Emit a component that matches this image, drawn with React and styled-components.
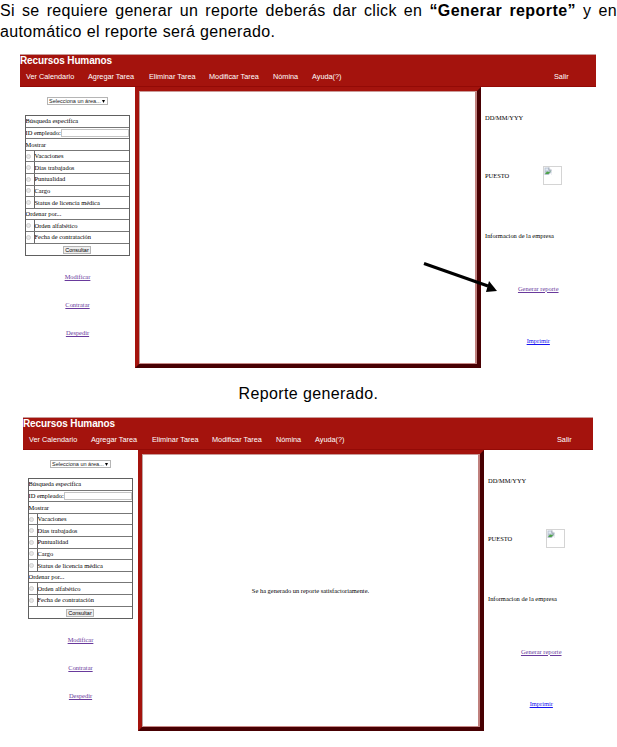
import React from "react";
import styled, { createGlobalStyle } from "styled-components";

const GlobalStyle = createGlobalStyle`
  * { box-sizing: border-box; }
  body { margin: 0; background: #fff; overflow: hidden; }
`;

const Page = styled.main`
  width: 617px;
  height: 747px;
  overflow: hidden;
  background: #fff;
  color: #000;
  font-family: "Liberation Sans", Arial, sans-serif;
`;

const Intro = styled.div`
  height: 54px;
  font-size: 16px;
  line-height: 21px;
`;

const IntroLine = styled.p`
  margin: 0;
  white-space: nowrap;
  letter-spacing: ${(p) => p.$tracking || 0}px;
  word-spacing: ${(p) => p.$gap || 0}px;
`;

const Strong = styled.b`
  letter-spacing: 0.42px;
`;

const Caption = styled.p`
  margin: 0;
  height: 49px;
  padding-top: 15px;
  text-align: center;
  font-size: 16px;
  line-height: 21px;
  letter-spacing: 0.38px;
`;

const Screen = styled.section`
  position: relative;
  width: ${(p) => p.$width}px;
  margin-left: ${(p) => p.$left}px;
`;

const Header = styled.header`
  height: 33px;
  border-top: 1px solid #c99a98;
  border-bottom: 1px solid #930a06;
  background: #a4130d;
  color: #fff;
`;

const Title = styled.h1`
  margin: 0;
  height: 12px;
  font-size: 10px;
  line-height: 11px;
  font-weight: bold;
  letter-spacing: -0.12px;
  white-space: nowrap;
`;

const Nav = styled.nav`
  display: flex;
  height: 19px;
  padding-left: 6px;
  gap: 14px;
  font-size: 7.3px;
  line-height: 20px;
  white-space: nowrap;
`;

const NavItem = styled.span`
  width: ${(p) => p.$width}px;
`;

const Logout = styled(NavItem)`
  margin-left: 198px;
`;

const Body = styled.div`
  display: grid;
  grid-template-columns: 115px 346px 115px;
  grid-template-rows: 281px;
  height: 281px;
  font-family: "Liberation Serif", "Times New Roman", serif;
  font-size: 6.45px;
`;

const Sidebar = styled.aside`
  display: flex;
  flex-direction: column;
  align-items: center;
  padding-top: 10px;
`;

const Select = styled.div`
  display: flex;
  align-items: center;
  justify-content: space-between;
  width: 61px;
  height: 8px;
  padding: 0 2px 0 1px;
  border: 1px solid #b5b5b5;
  color: #222;
  font-family: "Liberation Sans", Arial, sans-serif;
  font-size: 5.5px;
  line-height: 6px;
  white-space: nowrap;
`;

const Caret = styled.svg`
  width: 3px;
  height: 3px;
`;

const Filters = styled.div`
  display: grid;
  grid-template-rows: repeat(12, 11.62px);
  width: 105px;
  height: 141px;
  margin: 10px 1px 14px 0;
  border: 1px solid #606060;
  overflow: hidden;
`;

const FilterRow = styled.div`
  display: flex;
  align-items: center;
  justify-content: ${(p) => (p.$center ? "center" : "flex-start")};
  border-bottom: 1px solid #777;
  line-height: 10px;
  white-space: nowrap;

  &:last-child { border-bottom: 0; }
`;

const RadioCell = styled.span`
  display: flex;
  align-items: center;
  justify-content: center;
  width: 9px;
  height: 100%;
  flex: none;
  padding-right: 2px;
  border-right: 1px solid #666;
`;

const Radio = styled.span`
  width: 5px;
  height: 5px;
  border: 1px solid #d0d0d0;
  border-radius: 50%;
  background: #e8e8e8;
`;

const Field = styled.span`
  flex: 1;
  height: 8px;
  border: 1px solid #c4c4c4;
`;

const Submit = styled.span`
  height: 8px;
  padding: 0 1px;
  border: 1px solid #b5b5b5;
  background: #eee;
  font-family: "Liberation Sans", Arial, sans-serif;
  font-size: 5.5px;
  line-height: 6px;
`;

const Link = styled.a`
  color: ${(p) => (p.$fresh ? "#1414f0" : "#693a9c")};
  text-decoration: underline;
  text-decoration-thickness: 0.5px;
  white-space: nowrap;
`;

const SideLink = styled(Link)`
  height: 28px;
  line-height: 14px;
`;

const Frame = styled.section`
  display: flex;
  border: 4px solid;
  border-color: #a4130d #480002 #480002 #a4130d;
`;

const FrameInner = styled.div`
  display: flex;
  flex: 1;
  align-items: center;
  justify-content: center;
  border-style: solid;
  border-width: 1px 2px 1px 1px;
  border-color: #c99a98 #c0807d #c88a88 #bfa3a1;
`;

const Info = styled.aside`
  display: grid;
  grid-template-rows: 61px 55px 64px 42px 63px;
  width: 115px;
  padding-left: 4px;
`;

const InfoRow = styled.div`
  display: flex;
  align-items: center;
  justify-content: ${(p) => (p.$center ? "center" : "flex-start")};
  padding-right: ${(p) => (p.$center ? 4 : 0)}px;
  margin-left: ${(p) => (p.$center ? -0.5 : 0)}px;
  white-space: nowrap;
`;

const Role = styled.span`
  width: 58px;
`;

const Photo = styled.span`
  display: block;
  width: 19px;
  height: 19px;
  border: 1px solid #d4d4d4;
`;

const PhotoIcon = styled.svg`
  display: block;
  width: 8px;
  height: 8px;
`;

const Arrow = styled.svg`
  position: absolute;
  left: 400px;
  top: 204px;
  width: 82px;
  height: 38px;
`;

const nav = [
  ["Ver Calendario", 48],
  ["Agregar Tarea", 47],
  ["Eliminar Tarea", 46],
  ["Modificar Tarea", 50],
  ["Nómina", 25],
  ["Ayuda(?)", 30],
];

const showOptions = ["Vacaciones", "Días trabajados", "Puntualidad", "Cargo", "Status de licencia médica"];
const sortOptions = ["Orden alfabético", "Fecha de contratación"];

function Option({ label }) {
  return (
    <FilterRow>
      <RadioCell><Radio /></RadioCell>
      {label}
    </FilterRow>
  );
}

function HrScreen({ left, width, message, children }) {
  return (
    <Screen $left={left} $width={width}>
      <Header>
        <Title>Recursos Humanos</Title>
        <Nav>
          {nav.map(([label, w]) => <NavItem key={label} $width={w}>{label}</NavItem>)}
          <Logout $width={15}>Salir</Logout>
        </Nav>
      </Header>
      <Body>
        <Sidebar>
          <Select>
            Selecciona un área...
            <Caret viewBox="0 0 3 3"><path d="M0 0h3L1.5 3z" /></Caret>
          </Select>
          <Filters>
            <FilterRow>Búsqueda especifica</FilterRow>
            <FilterRow>ID empleado:<Field /></FilterRow>
            <FilterRow>Mostrar</FilterRow>
            {showOptions.map((o) => <Option key={o} label={o} />)}
            <FilterRow>Ordenar por...</FilterRow>
            {sortOptions.map((o) => <Option key={o} label={o} />)}
            <FilterRow $center><Submit>Consultar</Submit></FilterRow>
          </Filters>
          <SideLink href="#">Modificar</SideLink>
          <SideLink href="#">Contratar</SideLink>
          <SideLink href="#">Despedir</SideLink>
        </Sidebar>
        <Frame><FrameInner>{message}</FrameInner></Frame>
        <Info>
          <InfoRow>DD/MM/YYY</InfoRow>
          <InfoRow>
            <Role>PUESTO</Role>
            <Photo>
              <PhotoIcon viewBox="0 0 8 8">
                <path d="M0.5 0.5H5L7.5 3v5h-7z" fill="#b9c3d2" />
                <path d="M1.5 1.5h3v2h-3z" fill="#e3eaf5" />
                <path d="M1 7l2-2.5 2 .5 2-1-2.5 3z" fill="#4da348" />
                <path d="M5 0.5V3h2.5" fill="#fff" stroke="#8a94a2" strokeWidth=".7" />
                <path d="M4.5 8l3-2.5V8z" fill="#fff" />
              </PhotoIcon>
            </Photo>
          </InfoRow>
          <InfoRow>Informacion de la empresa</InfoRow>
          <InfoRow $center><Link href="#">Generar reporte</Link></InfoRow>
          <InfoRow $center><Link href="#" $fresh>Imprimir</Link></InfoRow>
        </Info>
      </Body>
      {children}
    </Screen>
  );
}

export default function App() {
  return (
    <Page>
      <GlobalStyle />
      <Intro>
        <IntroLine $tracking={0.33} $gap={2.35}>
          Si se requiere generar un reporte deberás dar click en <Strong>“Generar reporte”</Strong> y en
        </IntroLine>
        <IntroLine $tracking={0.36}>automático el reporte será generado.</IntroLine>
      </Intro>
      <HrScreen left={20} width={576}>
        <Arrow viewBox="0 0 82 38">
          <path d="M4 5.5L68 28" stroke="#000" strokeWidth="3" />
          <path d="M69 23L77 33L66 34z" fill="#000" />
        </Arrow>
      </HrScreen>
      <Caption>Reporte generado.</Caption>
      <HrScreen left={23} width={570} message="Se ha generado un reporte satisfactoriamente." />
    </Page>
  );
}
